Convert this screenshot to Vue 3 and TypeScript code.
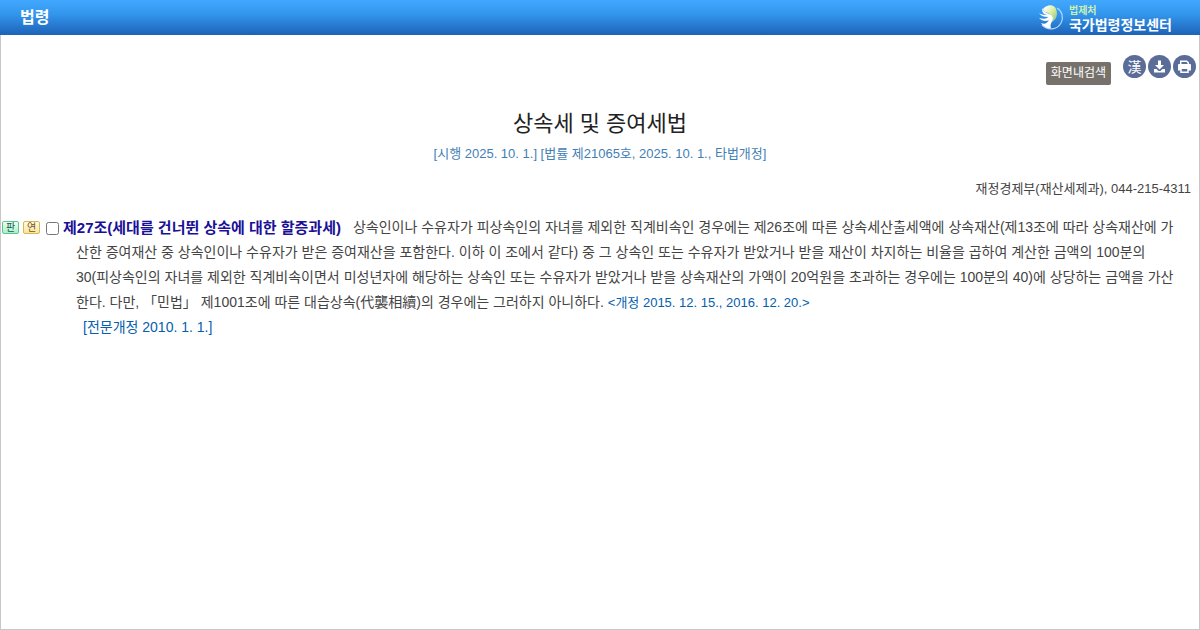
<script setup lang="ts">
interface Badge {
  label: string
  kind: string
}

const badges: Badge[] = [
  { label: '판', kind: 'case' },
  { label: '연', kind: 'history' },
]

const firstLine =
  '상속인이나 수유자가 피상속인의 자녀를 제외한 직계비속인 경우에는 제26조에 따른 상속세산출세액에 상속재산(제13조에 따라 상속재산에 가'
const middleLines: string[] = [
  '산한 증여재산 중 상속인이나 수유자가 받은 증여재산을 포함한다. 이하 이 조에서 같다) 중 그 상속인 또는 수유자가 받았거나 받을 재산이 차지하는 비율을 곱하여 계산한 금액의 100분의',
  '30(피상속인의 자녀를 제외한 직계비속이면서 미성년자에 해당하는 상속인 또는 수유자가 받았거나 받을 상속재산의 가액이 20억원을 초과하는 경우에는 100분의 40)에 상당하는 금액을 가산',
]
</script>

<template>
  <div class="page">
    <header class="bar">
      <h1>법령</h1>
      <a class="brand" href="#">
        <svg class="emblem" viewBox="0 0 27 27" aria-hidden="true">
          <defs>
            <linearGradient id="leaf" x1="0" y1="0" x2="1" y2="1">
              <stop offset="0.100" stop-color="#ffffff" />
              <stop offset="0.500" stop-color="#dcedA0" />
              <stop offset="1" stop-color="#7fbd8c" />
            </linearGradient>
          </defs>
          <path d="M20 4C25 7 27 13 24 19C20 26 11 27 5 21" fill="none" stroke="#b4dafb" stroke-width="1.200" />
          <path d="M6 5C10 0 17 0 19 5C21 10 20 15 15 18C16 13 14 11 11 9C8 8 6 7 6 5Z" fill="url(#leaf)" />
          <path d="M6 4C5 9 13 9 15 12C18 16 12 19 14 24C10 25 6 22 4 19C8 21 10 19 12 16C9 18 5 17 2 14C6 15 10 15 11 13C7 13 4 12 2 9C5 11 8 11 10 11C6 10 4 7 6 4Z" fill="#fff" />
        </svg>
        <span class="names">
          <span class="ministry">법제처</span>
          <span class="site">국가법령정보센터</span>
        </span>
      </a>
    </header>

    <main>
      <div class="tools">
        <button class="find" type="button">화면내검색</button>
        <div class="rounds">
          <button class="round" type="button" aria-label="한자 보기">漢</button>
          <button class="round" type="button" aria-label="저장">
            <svg viewBox="0 0 23 23" aria-hidden="true">
              <path d="M10 5.500h3v4.500h3l-4.500 4.500L7 10h3z" fill="#fff" />
              <path d="M6 14h2.500l2 2h2l2-2H17v3.500H6z" fill="#fff" />
            </svg>
          </button>
          <button class="round" type="button" aria-label="인쇄">
            <svg viewBox="0 0 23 23" aria-hidden="true">
              <path d="M7.700 9.500V6.200h6l1.600 1.600v1.700" fill="none" stroke="#fff" stroke-width="1.500" />
              <path d="M5 10q0-1 1-1h11q1 0 1 1v5.500H5z" fill="#fff" />
              <path d="M8 13.200h7v4h-7z" fill="#5a6c98" stroke="#fff" stroke-width="1.500" />
            </svg>
          </button>
        </div>
      </div>

      <h2>상속세 및 증여세법</h2>
      <p class="meta">[시행 2025. 10. 1.] [법률 제21065호, 2025. 10. 1., 타법개정]</p>
      <p class="contact">재정경제부(재산세제과), 044-215-4311</p>

      <section class="article">
        <div class="line first">
          <button v-for="b in badges" :key="b.label" type="button" class="badge" :class="b.kind">{{ b.label }}</button>
          <input id="article27" type="checkbox" />
          <label for="article27">제27조(세대를 건너뛴 상속에 대한 할증과세)</label>
          <span>{{ firstLine }}</span>
        </div>
        <div v-for="l in middleLines" :key="l" class="line">{{ l }}</div>
        <div class="line">
          한다. 다만, 「민법」 제1001조에 따른 대습상속(代襲相續)의 경우에는 그러하지 아니하다.
          <span class="revised">&lt;개정 2015. 12. 15., 2016. 12. 20.&gt;</span>
        </div>
        <div class="line whole">[전문개정 2010. 1. 1.]</div>
      </section>
    </main>
  </div>
</template>

<style>
body {
  margin: 0;
}
</style>

<style scoped>
.page {
  display: flex;
  flex-direction: column;
  min-height: 100vh;
  overflow: hidden;
  background: #fff;
  color: #444;
  font-family: "Liberation Sans", "Noto Sans CJK KR", sans-serif;
  font-size: 14px;
}
.page * {
  box-sizing: border-box;
}
.bar {
  display: flex;
  justify-content: space-between;
  align-items: center;
  height: 35px;
  padding: 0 28px 0 20px;
  background: linear-gradient(#42a8ff, #3396ed 40%, #1d62b8);
  color: #fff;
}
h1 {
  margin: 0;
  font-size: 16px;
  line-height: 34px;
}
.brand {
  display: flex;
  align-items: center;
  gap: 5px;
  color: #fff;
  text-decoration: none;
}
.emblem {
  width: 27px;
  height: 27px;
}
.names {
  display: flex;
  flex-direction: column;
  padding-top: 2px;
  font-weight: bold;
}
.ministry {
  color: #c9f0b0;
  font-size: 10px;
  line-height: 12px;
}
.site {
  font-size: 14px;
  line-height: 16px;
}
main {
  flex: 1;
  border: solid #c8c8c8;
  border-width: 0 1px 1px;
}
.tools {
  display: flex;
  justify-content: flex-end;
  align-items: flex-end;
  gap: 12px;
  padding: 20px 3px 0 0;
}
button {
  margin: 0;
  padding: 0;
  border: 0;
  font-family: inherit;
}
.find {
  height: 23px;
  margin-top: 7px;
  padding: 0 5px;
  border-radius: 2px;
  background: #76716b;
  color: #fff;
  font-size: 12px;
  line-height: 23px;
}
.rounds {
  display: flex;
  align-self: flex-start;
  gap: 2px;
}
.round {
  width: 23px;
  height: 23px;
  border-radius: 50%;
  background: #5a6c98;
  color: #fff;
  font-size: 14px;
  line-height: 22px;
}
.round svg {
  display: block;
  width: 23px;
  height: 23px;
}
h2 {
  margin: 24px 0 0;
  color: #222;
  font-size: 22px;
  font-weight: normal;
  line-height: 30px;
  text-align: center;
}
.meta {
  margin: 5px 0 0;
  color: #3f7fb5;
  font-size: 13px;
  line-height: 20px;
  text-align: center;
}
.contact {
  margin: 15px 8px 0 0;
  font-size: 13px;
  line-height: 20px;
  text-align: right;
}
.article {
  margin-top: 16px;
}
.line {
  padding-left: 75px;
  line-height: 25px;
  white-space: nowrap;
}
.first {
  display: flex;
  align-items: center;
  gap: 4px;
  height: 25px;
  padding-left: 1px;
}
.badge {
  flex: none;
  width: 17px;
  height: 13px;
  border: 1px solid;
  border-radius: 2px;
  font-size: 10px;
  line-height: 11px;
}
.case {
  border-color: #5cc596;
  background: linear-gradient(#effff6, #a8efcb);
  color: #17633d;
}
.history {
  border-color: #d9b84f;
  background: linear-gradient(#fffbe6, #f8e6a0);
  color: #7a5510;
}
input {
  flex: none;
  width: 13px;
  height: 13px;
  margin: 2px 0 0 2px;
}
label {
  padding-right: 8px;
  color: #1a1096;
  font-size: 15px;
  font-weight: bold;
}
.revised {
  color: #0560ac;
  font-size: 13px;
}
.whole {
  padding-left: 82px;
  color: #0560ac;
}
</style>
